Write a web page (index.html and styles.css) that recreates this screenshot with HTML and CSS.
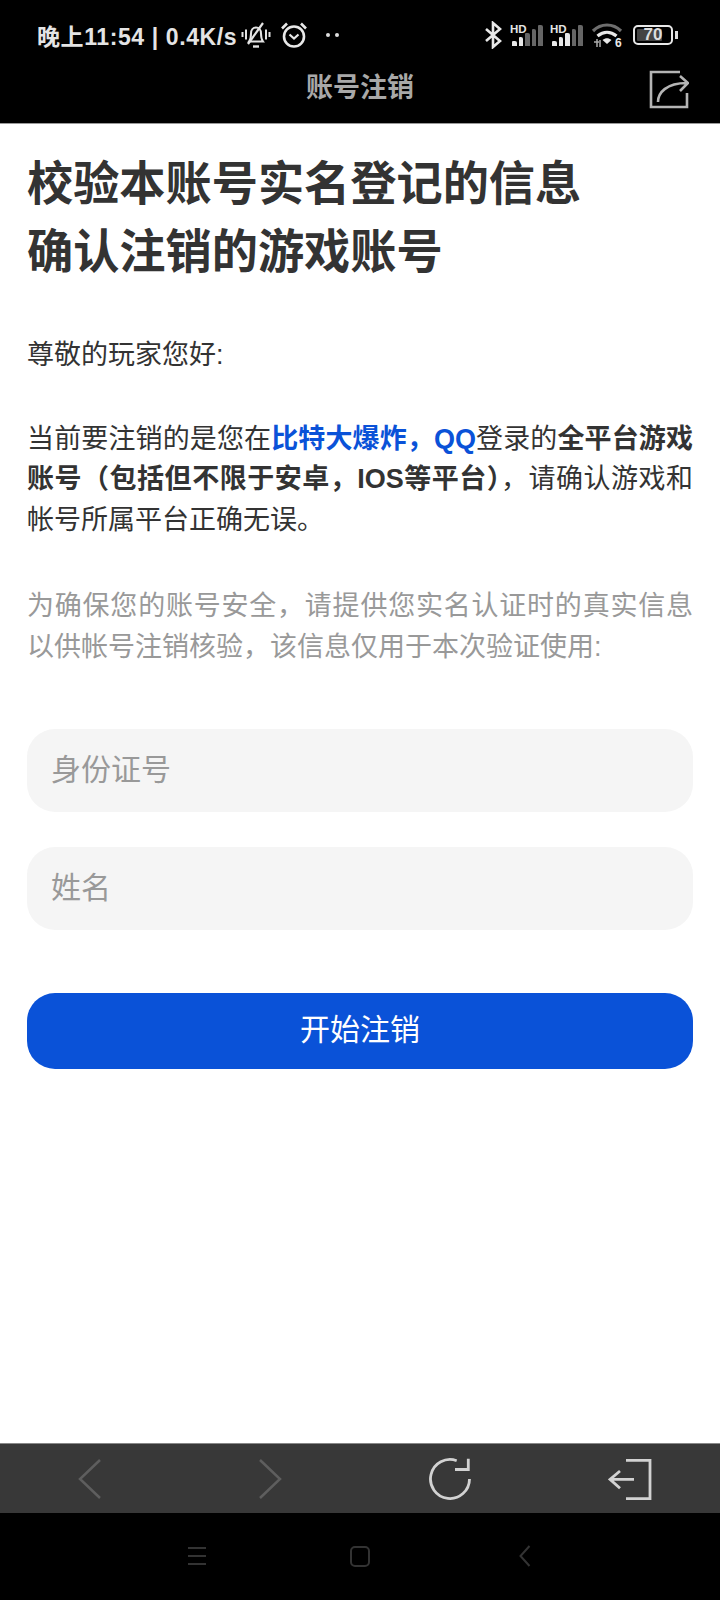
FILE: index.html
```html
<!DOCTYPE html>
<html lang="zh-CN">
<head>
  <meta charset="UTF-8">
  <meta name="viewport" content="width=device-width, initial-scale=1.0">
  <title>账号注销</title>
  <link rel="stylesheet" href="styles.css">
</head>
<body>
  <div class="phone">
    <!-- Status bar + title bar -->
    <header class="top">
      <div class="status">
        <div class="status-left">
          <span class="status-text">晚上11:54 | 0.4K/s</span>
          <svg class="ico-bell" width="30" height="28" viewBox="0 0 30 28" fill="none" stroke="#e4e4e4" stroke-width="2">
            <path d="M8 20.500c1.500-2 2-4 2-8 0-3.500 2-6 5-6s5 2.500 5 6c0 4 .5 6 2 8z"/>
            <path d="M12 25.500h6" stroke-width="2.400"/>
            <path d="M22 2L7 23" stroke-width="2.200"/>
            <path d="M1.500 11v5M5 8.500v10M25 8.500v10M28.500 11v5"/>
          </svg>
          <svg class="ico-alarm" width="28" height="28" viewBox="0 0 28 28" fill="none" stroke="#e8e8e8" stroke-width="2.600">
            <circle cx="14" cy="15.500" r="10"/>
            <path d="M2 7.500L7 2.500M26 7.500L21 2.500"/>
            <path d="M9.500 13.500l4.500 4 4.500-4" stroke-width="2.200"/>
          </svg>
          <span class="dots"><i></i><i></i></span>
        </div>
        <div class="status-right">
          <svg width="20" height="28" viewBox="0 0 20 28" fill="none" stroke="#e8e8e8" stroke-width="2.600">
            <path d="M3 8l14 12-7 6V2l7 6L3 20"/>
          </svg>
          <div class="signal">
            <span class="hd">HD</span>
            <span class="bars"><i class="on b1"></i><i class="on b2"></i><i class="b3"></i><i class="b4"></i><i class="b5"></i></span>
          </div>
          <div class="signal">
            <span class="hd">HD</span>
            <span class="bars"><i class="on b1"></i><i class="on b2"></i><i class="on b3"></i><i class="b4"></i><i class="b5"></i></span>
          </div>
          <svg class="ico-wifi" width="32" height="30" viewBox="0 0 32 30" fill="none">
            <path d="M2 8c8-8 20-8 28 0" stroke="#6e6e6e" stroke-width="3.200"/>
            <path d="M6.500 13c6-5 13-5 19 0" stroke="#e8e8e8" stroke-width="3.200"/>
            <path d="M11.500 17c3-2.500 6-2.500 9 0l-4.500 4z" fill="#e8e8e8"/>
            <path d="M3 19h5M6 16v8M9 17v7" stroke="#aaa" stroke-width="1.500"/>
            <text x="24" y="24" class="wifi-six">6</text>
          </svg>
          <div class="battery">
            <div class="battery-box"><span class="battery-fill"></span><span class="battery-num">70</span></div>
            <span class="battery-tip"></span>
          </div>
        </div>
      </div>
      <div class="titlebar">
        <h1>账号注销</h1>
        <svg class="share" width="40" height="40" viewBox="0 0 40 40" fill="none" stroke="#b5b5b5" stroke-width="2.600">
          <path d="M31 2H2V37H38V23"/>
          <path d="M9 32c0-9 8-19 29-19M31 6l8 7-8 8"/>
        </svg>
      </div>
    </header>

    <main class="content">
      <h2>校验本账号实名登记的信息<br>确认注销的游戏账号</h2>
      <p class="greet">尊敬的玩家您好:</p>
      <p class="notice">当前要注销的是您在<b class="blue">比特大爆炸，QQ</b>登录的<b>全平台游戏账号（包括但不限于安卓，IOS等平台）</b>，请确认游戏和帐号所属平台正确无误。</p>
      <p class="hint">为确保您的账号安全，请提供您实名认证时的真实信息以供帐号注销核验，该信息仅用于本次验证使用:</p>
      <form class="form">
        <input class="field" type="text" placeholder="身份证号">
        <input class="field" type="text" placeholder="姓名">
        <button class="submit" type="button">开始注销</button>
      </form>
    </main>

    <!-- Browser toolbar -->
    <div class="toolbar">
      <svg width="30" height="44" viewBox="0 0 30 44" fill="none" stroke="#5e5e5e" stroke-width="2.500"><path d="M25 3L5 22l20 19"/></svg>
      <svg width="30" height="44" viewBox="0 0 30 44" fill="none" stroke="#5e5e5e" stroke-width="2.500"><path d="M5 3l20 19L5 41"/></svg>
      <svg width="44" height="44" viewBox="0 0 44 44" fill="none" stroke="#d2d2d2" stroke-width="2.800"><path d="M41.500 22A19.500 19.500 0 1 1 28.700 3.700"/><path d="M27 12.500H40.300V1.800"/></svg>
      <svg width="44" height="44" viewBox="0 0 44 44" fill="none" stroke="#d2d2d2" stroke-width="2.800"><path d="M18 3.300H42V41.700H18"/><path d="M2 22.300H26M12 14L2 22.300l10 9"/></svg>
    </div>

    <nav class="navbar">
      <svg width="22" height="22" viewBox="0 0 22 22" stroke="#333" stroke-width="2"><path d="M2 3h18M2 11h18M2 19h18"/></svg>
      <svg width="22" height="22" viewBox="0 0 22 22" fill="none" stroke="#333" stroke-width="2"><rect x="2" y="2" width="18" height="19" rx="4"/></svg>
      <svg width="22" height="22" viewBox="0 0 22 22" fill="none" stroke="#333" stroke-width="2"><path d="M17.500 1l-9 10 9 10"/></svg>
    </nav>
  </div>
</body>
</html>
```

FILE: styles.css
```css
* {
  box-sizing: border-box;
}
body {
  margin: 0;
  font-family: "Liberation Sans", "Noto Sans CJK SC", sans-serif;
  background-color: #fff;
}
.phone {
  width: 720px;
  height: 1600px;
  display: flex;
  flex-direction: column;
}

/* top */
.top {
  height: 124px;
  background-color: #000;
  border-bottom: 1px solid #9a9a9a;
}
.status {
  height: 70px;
  padding: 19px 42px 0 37px;
  display: flex;
  justify-content: space-between;
  align-items: flex-start;
  color: #e4e4e4;
}
.status-left, .status-right {
  display: flex;
  align-items: center;
  height: 32px;
}
.status-text {
  font-size: 23px;
  font-weight: 700;
  letter-spacing: 0.6px;
  white-space: nowrap;
}
.ico-bell {
  margin-left: 4px;
}
.ico-alarm {
  margin-left: 9px;
}
.dots {
  display: flex;
  gap: 5px;
  margin-left: 18px;
}
.dots i {
  width: 4px;
  height: 4px;
  border-radius: 50%;
  background-color: #ddd;
}
.status-right {
  gap: 7px;
}
.signal {
  position: relative;
  width: 33px;
  height: 26px;
}
.hd {
  position: absolute;
  top: 2px;
  left: 0;
  font-size: 11.5px;
  line-height: 11px;
  font-weight: 700;
}
.bars {
  position: absolute;
  right: 0;
  bottom: 2px;
  display: flex;
  align-items: flex-end;
  gap: 2px;
}
.bars i {
  width: 4.6px;
  background-color: #666;
  border-radius: 1px 2px 0 0;
}
.bars i.on {
  background-color: #e8e8e8;
}
.b1 { height: 5px; }
.b2 { height: 9px; }
.b3 { height: 13px; }
.b4 { height: 17px; }
.b5 { height: 21px; }
.ico-wifi {
  margin: 5px 0 0 1px;
}
.wifi-six {
  font-size: 12px;
  font-weight: 700;
  fill: #e8e8e8;
}
.battery {
  display: flex;
  align-items: center;
  margin-left: 3px;
}
.battery-box {
  position: relative;
  width: 40px;
  height: 20px;
  border: 2px solid #e8e8e8;
  border-radius: 5px;
  padding: 2px;
}
.battery-fill {
  display: block;
  width: 78%;
  height: 100%;
  background-color: #444;
  border-radius: 1px;
}
.battery-num {
  position: absolute;
  top: 0;
  left: 0;
  right: 0;
  text-align: center;
  font-size: 17px;
  line-height: 16px;
  font-weight: 700;
  color: #ddd;
}
.battery-tip {
  width: 3px;
  height: 8px;
  margin-left: 2px;
  background-color: #ddd;
}
.titlebar {
  height: 53px;
  position: relative;
  display: flex;
  justify-content: center;
  align-items: flex-start;
}
.titlebar h1 {
  margin: 0;
  font-size: 27px;
  line-height: 36px;
  font-weight: 700;
  color: #a8a8a8;
}
.share {
  position: absolute;
  right: 31px;
  top: 0;
}

/* content */
.content {
  flex: 1;
  padding: 26px 27px 0;
  color: #333;
}
.content h2 {
  margin: 0 0 49px;
  font-size: 46.2px;
  line-height: 68px;
  font-weight: 700;
}
.content p {
  margin: 0;
  font-size: 27px;
  line-height: 40.5px;
  text-align: justify;
}
.content .greet {
  margin-bottom: 43px;
}
.blue {
  color: #0a52d8;
}
.content .hint {
  margin-top: 46px;
  color: #999;
}
.form {
  margin-top: 62px;
  display: flex;
  flex-direction: column;
}
.field {
  height: 83px;
  margin-bottom: 35px;
  padding: 0 24px 2px;
  border: none;
  border-radius: 28px;
  background-color: #f5f5f5;
  font-family: inherit;
  font-size: 30px;
}
.field::placeholder {
  color: #999;
}
.submit {
  height: 76px;
  margin-top: 28px;
  padding: 0 0 9px;
  border: none;
  border-radius: 28px;
  background-color: #0a52d8;
  color: #fff;
  font-family: inherit;
  font-size: 30px;
}

/* bottom */
.toolbar {
  height: 70px;
  background-color: #383838;
  border-top: 1px solid #888;
  display: grid;
  grid-template-columns: repeat(4, 180px);
  align-items: center;
  justify-items: center;
}
.navbar {
  height: 87px;
  background-color: #000;
  display: flex;
  justify-content: center;
  align-items: flex-start;
  gap: 141px;
  padding-top: 32px;
}
```
